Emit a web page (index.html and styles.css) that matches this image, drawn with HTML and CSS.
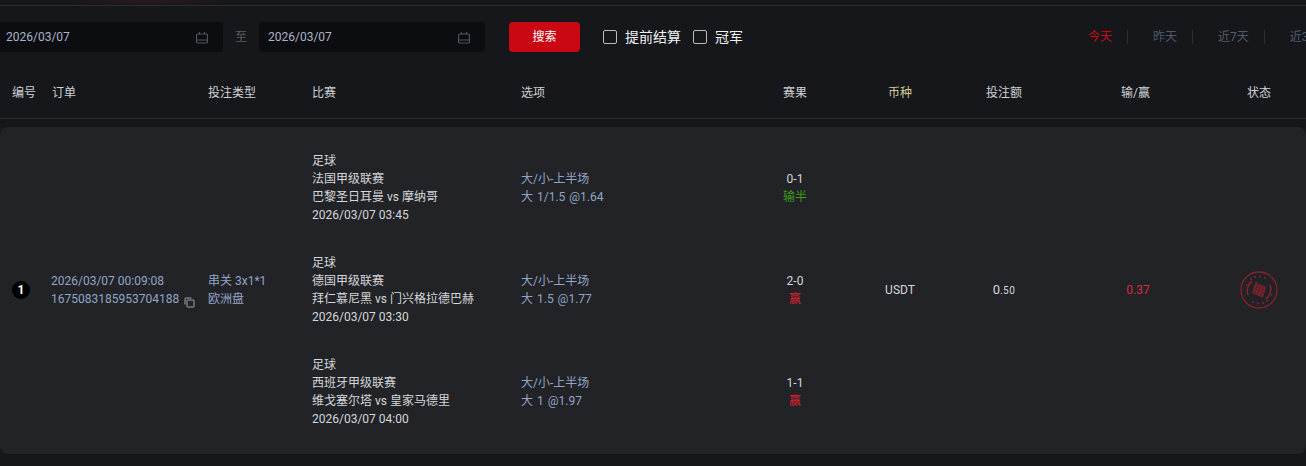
FILE: index.html
```html
<!DOCTYPE html>
<html lang="zh-CN">
<head>
  <meta charset="UTF-8"/>
  <title>注单记录</title>
  <link rel="stylesheet" href="styles.css">
</head>
<body>
  <div class="top-band"></div>

  <div class="toolbar">
    <div class="date-input">
      <span>2026/03/07</span>
      <svg class="cal" viewBox="0 0 12 13"><path d="M3.500 1v2.500M8.500 1v2.500M2 3h8a1.500 1.500 0 0 1 1.500 1.500v6a1.500 1.500 0 0 1-1.500 1.500h-8a1.500 1.500 0 0 1-1.500-1.500v-6a1.500 1.500 0 0 1 1.500-1.500zM.5 9h11"/></svg>
    </div>
    <span class="to">至</span>
    <div class="date-input">
      <span>2026/03/07</span>
      <svg class="cal" viewBox="0 0 12 13"><path d="M3.500 1v2.500M8.500 1v2.500M2 3h8a1.500 1.500 0 0 1 1.500 1.500v6a1.500 1.500 0 0 1-1.500 1.500h-8a1.500 1.500 0 0 1-1.500-1.500v-6a1.500 1.500 0 0 1 1.500-1.500zM.5 9h11"/></svg>
    </div>
    <button class="search">搜索</button>
    <label class="check first"><i></i>提前结算</label>
    <label class="check"><i></i>冠军</label>
    <ul class="quick">
      <li class="on">今天</li>
      <li>昨天</li>
      <li>近7天</li>
      <li>近30天</li>
    </ul>
  </div>

  <div class="cols head">
    <div>编号</div>
    <div>订单</div>
    <div>投注类型</div>
    <div>比赛</div>
    <div>选项</div>
    <div class="mid">赛果</div>
    <div class="mid coin">币种</div>
    <div class="mid">投注额</div>
    <div class="mid">输/赢</div>
    <div class="mid">状态</div>
  </div>

  <div class="cols card">
    <div><span class="num">1</span></div>
    <div class="order">
      <div>2026/03/07 00:09:08</div>
      <div class="order-id">1675083185953704188
        <svg class="copy" viewBox="0 0 11 11"><path d="M1 7.500V1.500a.5.5 0 0 1 .5-.5H7.500"/><rect x="3" y="3" width="7" height="7" rx=".5"/></svg>
      </div>
    </div>
    <div class="order">
      <div>串关 3x1*1</div>
      <div>欧洲盘</div>
    </div>
    <div class="legs">
      <div class="leg">
        <div class="match">
          <div>足球</div>
          <div>法国甲级联赛</div>
          <div>巴黎圣日耳曼 vs 摩纳哥</div>
          <div>2026/03/07 03:45</div>
        </div>
        <div class="pick">
          <div>大/小-上半场</div>
          <div>大 1/1.5 @1.64</div>
        </div>
        <div class="score">
          <div>0-1</div>
          <div class="half">输半</div>
        </div>
      </div>
      <div class="leg">
        <div class="match">
          <div>足球</div>
          <div>德国甲级联赛</div>
          <div>拜仁慕尼黑 vs 门兴格拉德巴赫</div>
          <div>2026/03/07 03:30</div>
        </div>
        <div class="pick">
          <div>大/小-上半场</div>
          <div>大 1.5 @1.77</div>
        </div>
        <div class="score">
          <div>2-0</div>
          <div class="won">赢</div>
        </div>
      </div>
      <div class="leg">
        <div class="match">
          <div>足球</div>
          <div>西班牙甲级联赛</div>
          <div>维戈塞尔塔 vs 皇家马德里</div>
          <div>2026/03/07 04:00</div>
        </div>
        <div class="pick">
          <div>大/小-上半场</div>
          <div>大 1 @1.97</div>
        </div>
        <div class="score">
          <div>1-1</div>
          <div class="won">赢</div>
        </div>
      </div>
    </div>
    <div class="mid">USDT</div>
    <div class="mid stake">0<small>.50</small></div>
    <div class="mid profit">0.37</div>
    <div class="mid">
      <svg class="stamp" viewBox="0 0 38 38">
        <circle cx="19" cy="19" r="18" stroke-width="1.300"/>
        <!-- dots top and bottom -->
        <circle class="dot" cx="11" cy="8" r="1"/>
        <circle class="dot" cx="15" cy="6" r="1"/>
        <circle class="dot" cx="20" cy="5.500" r="1"/>
        <circle class="dot" cx="25" cy="7" r="1"/>
        <circle class="dot" cx="13" cy="31" r="1"/>
        <circle class="dot" cx="18" cy="32.500" r="1"/>
        <circle class="dot" cx="23" cy="32" r="1"/>
        <circle class="dot" cx="27" cy="30" r="1"/>
        <circle class="dot" cx="6.500" cy="14" r="1"/>
        <circle class="dot" cx="31.500" cy="24" r="1"/>
        <!-- arcs left and right -->
        <path d="M8 24a12.500 12.500 0 0 1 4-14M30 14a12.500 12.500 0 0 1-4 14" stroke-width="1.600"/>
        <!-- hatched centre -->
        <path class="seal" d="M15 11l11 5-3 11-11-5z"/>
        <path d="M14.500 13l10.500 4.500M13.500 16l10.500 4.500M13 19l10 4.500M12.800 21.500l9.500 4M17 11l-4 11M20 12.500l-4 11M23 14l-4 11M25.500 15.500l-3 10" stroke-width=".8"/>
      </svg>
    </div>
  </div>
</body>
</html>
```

FILE: styles.css
```css
* { box-sizing: border-box; }
html, body { height: 100%; margin: 0; padding: 0; }
body {
  background: #15171a;
  color: #d5d7da;
  font-family: Roboto, 'Noto Sans CJK SC', sans-serif;
  font-size: 12px;
  line-height: 18px;
  overflow: hidden;
}

.top-band {
  height: 6px;
  border-bottom: 1px solid #2b2d30;
  background: radial-gradient(ellipse 90px 8px at 150px 0, #2a1a1e, transparent);
}

/* filtros */
.toolbar {
  display: flex;
  align-items: center;
  width: 1400px;
  height: 30px;
  margin: 16px 0 0 -3px;
}
.date-input {
  display: flex;
  align-items: center;
  justify-content: space-between;
  width: 226px;
  height: 30px;
  padding: 0 15px 0 9px;
  background: #0c0d10;
  border-radius: 4px;
  color: #aab4c6;
}
.cal { width: 12px; height: 13px; fill: none; stroke: #50545c; stroke-width: 1.200; }
.to { width: 36px; text-align: center; color: #5a5d62; }
.search {
  width: 71px;
  height: 30px;
  margin-left: 24px;
  background: #c90814;
  border: none;
  border-radius: 4px;
  color: #fff;
  font: inherit;
}
.check {
  display: flex;
  align-items: center;
  gap: 8px;
  margin-left: 12px;
  color: #f2f3f4;
  font-size: 14px;
}
.check.first { margin-left: 23px; }
.check i {
  width: 14px;
  height: 14px;
  border: 1px solid #b9bbbe;
  border-radius: 2px;
}
.quick {
  display: flex;
  list-style: none;
  margin: 0 0 0 345px;
  padding: 0;
  color: #4f5a6b;
}
.quick li {
  height: 14px;
  line-height: 14px;
  padding: 0 15px 0 25px;
  border-right: 1px solid #2e3034;
}
.quick li:first-child { padding-left: 0; }
.quick li.on { color: #c90814; }

/* tabla */
.cols {
  display: grid;
  grid-template-columns: 40px 156px 104px 209px 224px 100px 110px 98px 165px 82px;
  align-items: center;
  padding-left: 12px;
}
.head {
  height: 52px;
  margin-top: 15px;
  border-bottom: 1px solid #2b2d30;
  color: #cfd2d6;
}
.mid { text-align: center; }
.head .coin { color: #d8c99a; }

.card {
  grid-template-columns: 39px 157px 104px 533px 110px 98px 170px 72px;
  margin-top: 8px;
  height: 327px;
  padding-top: 25px;
  padding-bottom: 26px;
  background: #212327;
  border-radius: 8px;
}
.num {
  display: block;
  width: 18px;
  height: 18px;
  border-radius: 50%;
  background: #000;
  color: #fff;
  font-weight: 700;
  text-align: center;
}
.order { color: #93a5c6; }
.order-id { display: flex; align-items: center; gap: 5px; white-space: nowrap; }
.copy { width: 11px; height: 11px; margin-top: 6px; fill: none; stroke: #a3a5aa; stroke-width: 1; }

.legs { display: flex; flex-direction: column; gap: 30px; }
.leg {
  display: grid;
  grid-template-columns: 209px 224px 100px;
}
.pick, .score { padding-top: 18px; }
.pick { color: #93a5c6; word-spacing: 1px; }
.score { text-align: center; }
.half { color: #3f9a14; }
.won { color: #d8222f; }

.stake { font-size: 13px; }
.stake small { font-size: 10px; letter-spacing: .5px; }
.profit { color: #dc2b38; }
.stamp {
  display: block;
  width: 38px;
  height: 38px;
  margin: 0 auto;
  fill: none;
  stroke: #85222c;
}
.stamp .dot { fill: #85222c; stroke: none; }
.stamp .seal { fill: #85222c; stroke: none; opacity: .5; }
```
